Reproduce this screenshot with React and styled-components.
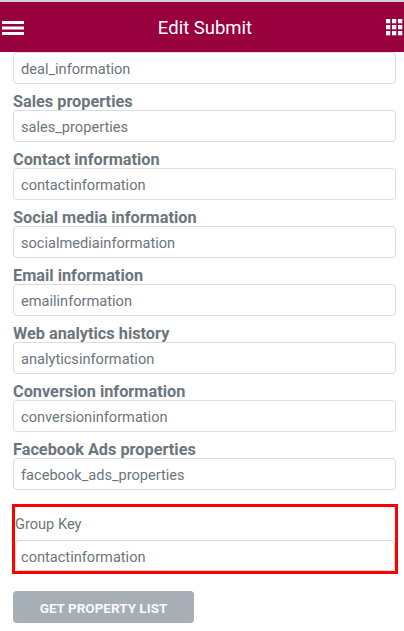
import React from "react";
import styled, { createGlobalStyle } from "styled-components";

const GlobalStyle = createGlobalStyle`
  html, body { margin: 0; padding: 0; background: #ffffff; }
  body { font-family: Roboto, "Noto Sans", "Liberation Sans", sans-serif; }
  * { box-sizing: border-box; }
`;

const Page = styled.div`
  width: 404px;
  height: 631px;
  overflow: hidden;
  border-top: 2px solid #d4d4d4;
  background: #fff;
`;

const Header = styled.header`
  position: relative;
  z-index: 2;
  height: 50px;
  background: #98003e;
  display: flex;
  align-items: center;
  padding: 1px 1px 0 2px;
`;

const Title = styled.h1`
  flex: 1;
  margin: 0;
  text-align: center;
  color: #ffffff;
  font-size: 18.5px;
  font-weight: 400;
  line-height: 24px;
`;

const IconButton = styled.span`
  display: flex;
  align-items: center;
  justify-content: center;
  color: #ffffff;
`;

const Content = styled.main`
  padding: 0 8px 0 13px;
`;

const Field = styled.div`
  display: flex;
  flex-direction: column;
`;

const Label = styled.label`
  display: block;
  margin: 9px 0 0;
  line-height: 17px;
  font-size: 16.3px;
  font-weight: 700;
  color: #6c757d;
`;

const TextInput = styled.input`
  display: block;
  width: 100%;
  height: 32px;
  margin: 0;
  padding: 1px 7px 0;
  border: 1px solid #dcdcdc;
  border-radius: 4px;
  background: #fff;
  color: #6c757d;
  font-family: inherit;
  font-size: 14.6px;
  outline: none;
`;

const Highlight = styled.div`
  margin: 14px -2px 0 -1px;
  border: 3px solid #ff0000;
  display: flex;
  flex-direction: column;
`;

const GroupLabel = styled.label`
  display: flex;
  align-items: center;
  height: 33px;
  font-size: 14.6px;
  font-weight: 400;
  color: #6c757d;
`;

const GroupInput = styled(TextInput)`
  height: 31px;
  padding: 2px 5px 0;
  border-color: #d6d6d6;
`;

const Button = styled.button`
  display: block;
  margin-top: 17px;
  width: 181px;
  height: 32px;
  padding: 2px 0 0;
  border: none;
  border-radius: 4px;
  background: #a7afb6;
  color: #f8f9fa;
  font-family: inherit;
  font-size: 13.5px;
  font-weight: 700;
  text-transform: uppercase;
  cursor: pointer;
`;

const MenuIcon = () => (
  <svg width="22" height="14" viewBox="0 0 22 14">
    <rect x="0" y="0" width="22" height="3" fill="#fff" />
    <rect x="0" y="5.5" width="22" height="3" fill="#fff" />
    <rect x="0" y="11" width="22" height="3" fill="#fff" />
  </svg>
);

const GridIcon = () => (
  <svg width="17" height="17" viewBox="0 0 17 17">
    {[0, 6, 12].map((y) =>
      [0, 6, 12].map((x) => (
        <rect key={`${x}-${y}`} x={x} y={y} width="4.3" height="4.3" fill="#fff" />
      ))
    )}
  </svg>
);

const fields = [
  { label: null, value: "deal_information" },
  { label: "Sales properties", value: "sales_properties" },
  { label: "Contact information", value: "contactinformation" },
  { label: "Social media information", value: "socialmediainformation" },
  { label: "Email information", value: "emailinformation" },
  { label: "Web analytics history", value: "analyticsinformation" },
  { label: "Conversion information", value: "conversioninformation" },
  { label: "Facebook Ads properties", value: "facebook_ads_properties" },
];

export default function App() {
  return (
    <>
      <GlobalStyle />
      <Page>
        <Header>
          <IconButton>
            <MenuIcon />
          </IconButton>
          <Title>Edit Submit</Title>
          <IconButton>
            <GridIcon />
          </IconButton>
        </Header>
        <Content>
          {fields.map((f) => (
            <Field key={f.value}>
              {f.label && <Label>{f.label}</Label>}
              <TextInput readOnly value={f.value} />
            </Field>
          ))}
          <Highlight>
            <GroupLabel>Group Key</GroupLabel>
            <GroupInput readOnly value="contactinformation" />
          </Highlight>
          <Button>Get Property List</Button>
        </Content>
      </Page>
    </>
  );
}
